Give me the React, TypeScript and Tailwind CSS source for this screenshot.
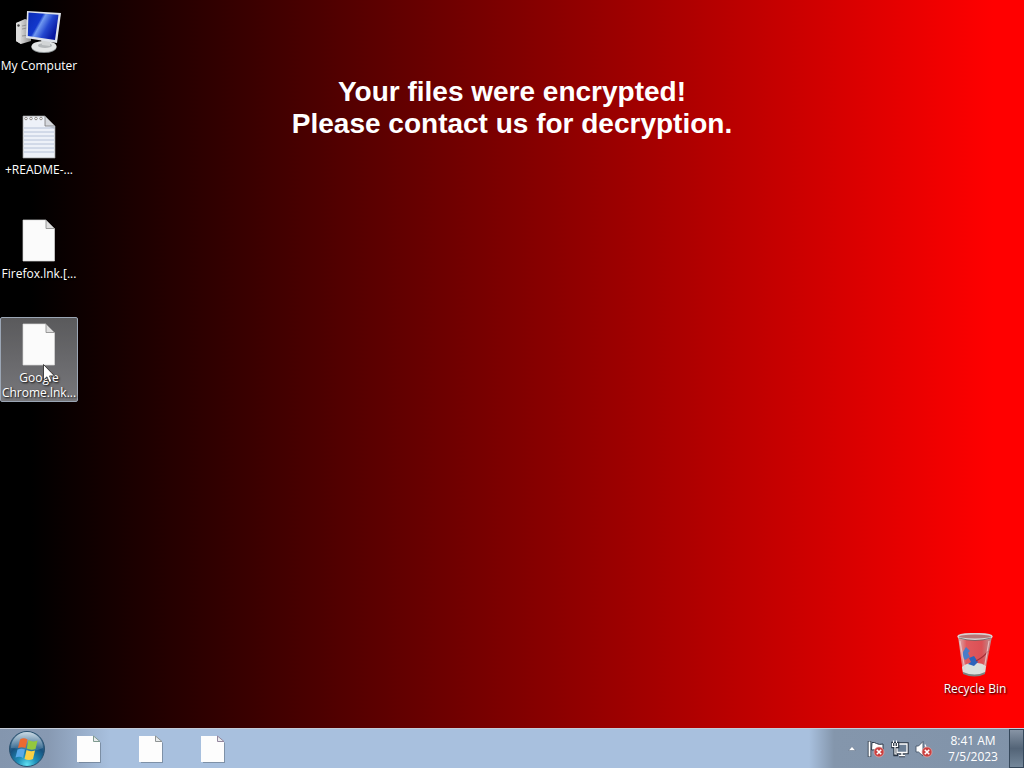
import { ReactNode } from 'react';
import clsx from 'clsx';

interface DesktopItemProps {
    label: string;
    icon: ReactNode;
    selected?: boolean;
}

interface TaskbarItem {
    name: string;
    tint: string;
}

const taskbarItems: TaskbarItem[] = [
    { name: 'Browser', tint: '#7f9a90' },
    { name: 'Explorer', tint: '#8f9494' },
    { name: 'Media player', tint: '#94869e' },
];

function ComputerIcon() {
    return (
        <svg viewBox="0 0 48 48" className="size-12" aria-hidden="true">
            <defs>
                <linearGradient id="screen" x1="0" y1="0" x2="1" y2="0.5">
                    <stop offset="0" stopColor="#0a2bb4" />
                    <stop offset="0.42" stopColor="#1238cc" />
                    <stop offset="0.5" stopColor="#6f98f0" />
                    <stop offset="0.72" stopColor="#2447cf" />
                    <stop offset="1" stopColor="#0717a0" />
                </linearGradient>
                <linearGradient id="tower" x1="0" y1="0" x2="1" y2="0">
                    <stop offset="0" stopColor="#f2f2f2" />
                    <stop offset="0.45" stopColor="#c9c9c9" />
                    <stop offset="1" stopColor="#8d8d8d" />
                </linearGradient>
            </defs>
            <path d="M1 13 L10 9 L16 11 L16 31 L6 34 L1 31 Z" fill="url(#tower)" />
            <path d="M1 13 L6 12 L6 34 L1 31 Z" fill="#dcdcdc" />
            <circle cx="3.500" cy="15.500" r="1.200" fill="#444" />
            <path d="M7 16 L12 15 M7 19 L12 18 M7 26 L14 25" stroke="#888" strokeWidth="0.8" />
            <ellipse cx="29" cy="37.500" rx="12.500" ry="5.500" fill="#8f9496" />
            <ellipse cx="29" cy="36.500" rx="12.500" ry="5.500" fill="#e4e6e6" />
            <ellipse cx="30" cy="35.500" rx="7" ry="2.500" fill="#b3b7b9" />
            <path d="M26 29 L35 31 L35 36 L27 35 Z" fill="#d2d5d6" />
            <path d="M12 1 L46 3 L42 33 L11 28 Z" fill="#dfe3ea" />
            <path d="M13.500 2.500 L43.500 4.700 L40 30 L12.800 26 Z" fill="url(#screen)" />
        </svg>
    );
}

function NotepadIcon() {
    return (
        <svg viewBox="0 0 48 48" className="size-12" aria-hidden="true">
            <path d="M8 2 H30 L40 12 V44 H8 Z" fill="#edf1f8" stroke="#9a9a9a" strokeWidth="0.7" />
            {[14, 18, 22, 26, 30, 34, 38].map((y) => (
                <path key={y} d={`M9 ${y} H39`} stroke="#b6c2d8" strokeWidth="1" />
            ))}
            {[11, 16, 21, 26].map((x) => (
                <circle key={x} cx={x} cy="4.500" r="1.300" fill="#fff" stroke="#77716c" strokeWidth="0.8" />
            ))}
            <path d="M30 2 V12 H40 Z" fill="#d5d8dd" stroke="#777" strokeWidth="0.8" />
            <path d="M32 12 H40 V15 Z" fill="#b8bdc8" />
        </svg>
    );
}

function BlankFileIcon() {
    return (
        <svg viewBox="0 0 48 48" className="size-12" aria-hidden="true">
            <path d="M8 2 H31 L39.500 10.500 V43 H8 Z" fill="#fbfbfb" stroke="#d8d8d8" strokeWidth="0.7" />
            <path d="M31 2 V10.500 H39.500 Z" fill="#dedede" stroke="#858585" strokeWidth="0.8" />
        </svg>
    );
}

function RecycleBinIcon() {
    return (
        <svg viewBox="0 0 48 48" className="size-12" aria-hidden="true">
            <defs>
                <linearGradient id="bin" x1="0" y1="0" x2="1" y2="0">
                    <stop offset="0" stopColor="#d8b4b4" />
                    <stop offset="0.25" stopColor="#e05a5e" />
                    <stop offset="0.7" stopColor="#dc5055" />
                    <stop offset="1" stopColor="#b99696" />
                </linearGradient>
            </defs>
            <path d="M7 3 L12 40 Q24 46 34 40 L41 3 Z" fill="url(#bin)" />
            <path d="M11 34 Q16 29 22 31 Q28 28 35 33 L34 40 Q24 45 12 40 Z" fill="#d9e0dc" />
            <path d="M12 39 Q24 44 34 39 L34 41 Q24 46 12 41 Z" fill="#7c8280" />
            <path d="M12 19 L15 14 L19 18 L17 20 L19 24 L14 27 L11 23 Z" fill="#4a7cc8" />
            <path d="M18 25 L23 23 L27 29 L23 33 L17 31 L20 29 Z" fill="#2b63bb" />
            <path d="M37 18 Q33 24 25 28" fill="none" stroke="#a22c35" strokeWidth="1.300" />
            <path d="M9 8 L14 37 M38 8 L33 37" stroke="#f3cccc" strokeWidth="1.200" opacity="0.8" />
            <ellipse cx="24" cy="3.500" rx="17" ry="2.800" fill="#b87576" stroke="#d7d2d2" strokeWidth="1.500" />
            <path d="M8 5 Q24 10 40 5" fill="none" stroke="#676363" strokeWidth="0.8" />
        </svg>
    );
}

function StartOrb() {
    return (
        <svg viewBox="0 0 38 38" className="size-[38px]" aria-hidden="true">
            <defs>
                <radialGradient id="orb" cx="0.5" cy="0.95" r="0.9">
                    <stop offset="0" stopColor="#5fe0f2" />
                    <stop offset="0.3" stopColor="#1f8fb8" />
                    <stop offset="0.65" stopColor="#17527f" />
                    <stop offset="1" stopColor="#547a98" />
                </radialGradient>
                <linearGradient id="gloss" x1="0" y1="0" x2="0" y2="1">
                    <stop offset="0" stopColor="#e6f0f6" stopOpacity="0.8" />
                    <stop offset="1" stopColor="#a8c4d6" stopOpacity="0.15" />
                </linearGradient>
            </defs>
            <circle cx="19" cy="19" r="17.500" fill="url(#orb)" stroke="#29516f" strokeWidth="1" />
            <path d="M3 18 A16 16 0 0 1 35 18 Q27 22 19 20 Q10 18 3 18 Z" fill="url(#gloss)" />
            <path d="M12 9.500 Q15.500 7 19.500 9.500 L17.500 18 Q14 16.500 10 18 Z" fill="#ea6a31" />
            <path d="M20.500 10 Q24.500 12.500 29.500 10.500 L27.500 19 Q23 20.500 18.800 18.500 Z" fill="#93c83e" />
            <path d="M9.500 19.500 Q13.500 18 17 19.500 L15 28 Q12 26 7.500 27.500 Z" fill="#58a9e8" />
            <path d="M18.500 20 Q22.500 22 27 20.500 L25 29 Q21 31 16.500 29 Z" fill="#fbd044" />
        </svg>
    );
}

function SmallFileIcon({ tint }: { tint: string }) {
    return (
        <svg viewBox="0 0 26 30" className="h-[30px] w-[26px]" aria-hidden="true">
            <path d="M3 3 H19 L25 9 V29 H3 Z" fill="#5b6a7a" opacity="0.55" />
            <path d="M1 2 H17.500 L24 8 V28 H1 Z" fill="#fdfdfd" />
            <path d="M17.500 2 V7.500 H24 Z" fill="#e8ebec" stroke={tint} strokeWidth="1" />
        </svg>
    );
}

function ErrorBadge({ x, y }: { x: number; y: number }) {
    return (
        <g transform={`translate(${x} ${y})`}>
            <circle r="5" fill="#cb3f3e" stroke="#e3a9a9" strokeWidth="0.7" />
            <path d="M-2.200 -2.200 L2.200 2.200 M2.200 -2.200 L-2.200 2.200" stroke="#fff" strokeWidth="1.600" />
        </g>
    );
}

function FlagIcon() {
    return (
        <svg viewBox="0 0 18 18" className="size-[18px]" aria-hidden="true">
            <path d="M2.500 1 V17" stroke="#2f3b4a" strokeWidth="3.500" />
            <path d="M5 2.500 Q7.500 2 9.500 3.500 Q12 5 16 4 V11 Q12 11.500 9.500 10.500 Q7 9.500 4.500 10 Z" fill="#fff" stroke="#2f3b4a" strokeWidth="1" />
            <path d="M2.500 1.500 V16.500" stroke="#fff" strokeWidth="1.800" />
            <ErrorBadge x={12} y={12} />
        </svg>
    );
}

function NetworkIcon() {
    return (
        <svg viewBox="0 0 18 18" className="size-[18px]" aria-hidden="true">
            <path d="M6 4 H16 V12.500 H6 Z M11 12 V15 M8 15.500 H14 M4 7 V14.500 H7" fill="none" stroke="#2a3543" strokeWidth="3.400" />
            <path d="M6 4 H16 V12.500 H6 Z" fill="#6c7f95" stroke="#fff" strokeWidth="1.300" />
            <path d="M11 12 V15 M8 15.500 H14" stroke="#fff" strokeWidth="1.400" />
            <path d="M1 2.500 H7.500 V7.500 H1 Z" fill="#2a3543" stroke="#2a3543" strokeWidth="1.500" />
            <path d="M1.500 3 V6.500 H6.500 V3 M4 3 V7 M4 7 V14 H6" fill="none" stroke="#fff" strokeWidth="1.200" />
            <path d="M2.500 0.500 V3 M5.500 0.500 V3" stroke="#fff" strokeWidth="1" />
        </svg>
    );
}

function SpeakerIcon() {
    return (
        <svg viewBox="0 0 18 18" className="size-[18px]" aria-hidden="true">
            <path d="M1 6 H3.500 L8 1.500 V16 L3.500 12 H1 Z" fill="#fff" stroke="#46566a" strokeWidth="0.9" />
            <path d="M10 4.500 Q12 8 10 12" fill="none" stroke="#fff" strokeWidth="1.200" />
            <ErrorBadge x={12} y={12} />
        </svg>
    );
}

function Cursor() {
    return (
        <svg viewBox="0 0 12 20" className="absolute top-[46px] left-[42px] h-5 w-3" aria-hidden="true">
            <path d="M0.500 0.500 V16 L4 12.800 L6.300 18.500 L8.900 17.400 L6.600 11.900 H11.500 Z" fill="#fff" stroke="#222" strokeWidth="0.8" />
        </svg>
    );
}

function DesktopItem({ label, icon, selected }: DesktopItemProps) {
    return (
        <button
            type="button"
            className={clsx(
                'relative flex w-[78px] flex-col items-center rounded-xs border pt-1 pb-px text-center',
                selected
                    ? 'border-[#9ba6b5] bg-linear-to-b from-[#5a5a5c] to-[#77777b]'
                    : 'border-transparent'
            )}
        >
            {icon}
            <span className="text-xs leading-[15px] whitespace-pre text-white [text-shadow:1px_1px_2px_#000]">{label}</span>
            {selected && <Cursor />}
        </button>
    );
}

export default function App() {
    return (
        <div className="flex min-h-screen flex-col bg-black font-['Open_Sans','Noto_Sans',sans-serif]">
            {/* Desktop */}
            <main className="grid flex-1 grid-cols-[88px_1fr_88px] bg-linear-to-r/srgb from-black from-3% to-[#ff0000] to-97%">
                <div className="grid auto-rows-[104px] content-start items-start pt-[5px]">
                    <DesktopItem label="My Computer" icon={<ComputerIcon />} />
                    <DesktopItem label="+README-..." icon={<NotepadIcon />} />
                    <DesktopItem label="Firefox.lnk.[..." icon={<BlankFileIcon />} />
                    <DesktopItem label={'Google\nChrome.lnk...'} icon={<BlankFileIcon />} selected />
                </div>
                <h1 className="pt-[76px] text-center font-['Liberation_Sans',Arial,sans-serif] text-[28px] leading-8 font-bold text-white">
                    Your files were encrypted!
                    <br />
                    Please contact us for decryption.
                </h1>
                <div className="flex flex-col justify-end pb-[30px]">
                    <DesktopItem label="Recycle Bin" icon={<RecycleBinIcon />} />
                </div>
            </main>

            {/* Taskbar */}
            <footer className="flex h-10 items-stretch border-t border-[#c3cbd8] bg-[linear-gradient(to_right,#8496ae_0,#8799b2_48px,#a8c0de_110px,#a8c0de_calc(100%-215px),#8496ac_calc(100%-190px),#8193a9_100%)]">
                <button type="button" aria-label="Start" className="flex w-[58px] items-center pl-2">
                    <StartOrb />
                </button>
                <nav className="flex flex-1">
                    {taskbarItems.map((item) => (
                        <button key={item.name} type="button" aria-label={item.name} className="flex w-[62px] items-center justify-center">
                            <SmallFileIcon tint={item.tint} />
                        </button>
                    ))}
                </nav>
                <div className="flex items-center gap-1.5 pr-1">
                    <button type="button" aria-label="Show hidden icons" className="flex size-[18px] items-center justify-center">
                        <svg viewBox="0 0 8 5" className="h-[5px] w-2" aria-hidden="true">
                            <path d="M4 0.500 L7.500 4.500 H0.500 Z" fill="#fff" stroke="#5a6b80" strokeWidth="0.5" />
                        </svg>
                    </button>
                    <button type="button" aria-label="Action Center"><FlagIcon /></button>
                    <button type="button" aria-label="Network"><NetworkIcon /></button>
                    <button type="button" aria-label="Volume"><SpeakerIcon /></button>
                </div>
                <button type="button" className="flex w-[72px] flex-col items-center justify-center text-xs leading-4 text-white">
                    <time>8:41 AM</time>
                    <time>7/5/2023</time>
                </button>
                <button
                    type="button"
                    aria-label="Show desktop"
                    className="w-[15px] border border-[#35475a] bg-linear-to-b from-[#8794a5] via-[#536477] to-[#74879a]"
                />
            </footer>
        </div>
    );
}
